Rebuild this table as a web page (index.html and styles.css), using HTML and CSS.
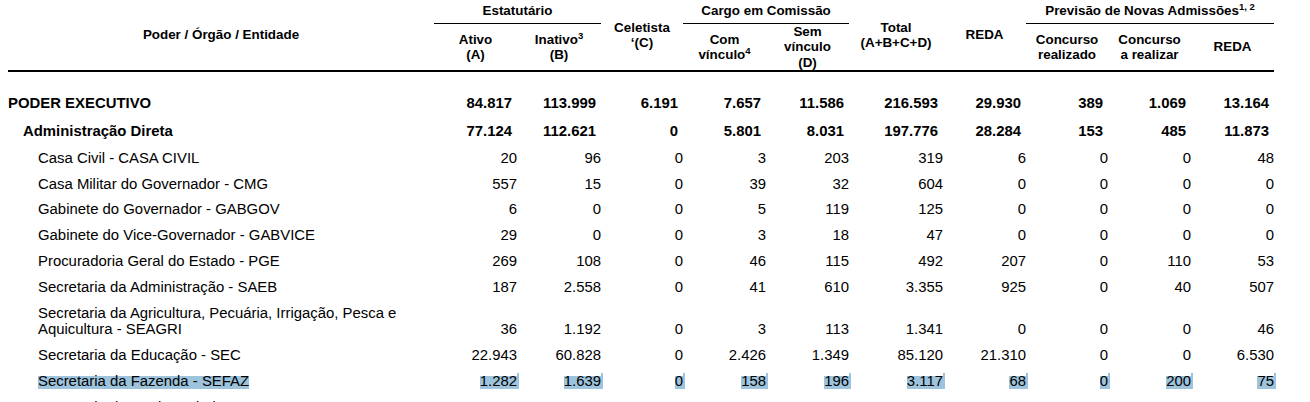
FILE: index.html
```html
<!DOCTYPE html>
<html lang="pt-BR">
<head>
<meta charset="utf-8">
<title>Quadro de Pessoal</title>
<link rel="stylesheet" href="styles.css">
</head>
<body>
<table class="grid">
  <colgroup>
    <col class="c-name">
    <col class="c-83"><col class="c-84"><col class="c-82"><col class="c-83"><col class="c-83">
    <col class="c-94"><col class="c-83"><col class="c-82"><col class="c-83"><col class="c-83">
  </colgroup>
  <thead>
    <tr class="h1">
      <th rowspan="2" class="span">Poder / Órgão / Entidade</th>
      <th colspan="2" class="group">Estatutário</th>
      <th rowspan="2" class="span">Celetista<br>‘(C)</th>
      <th colspan="2" class="group">Cargo em Comissão</th>
      <th rowspan="2" class="span">Total<br>(A+B+C+D)</th>
      <th rowspan="2" class="span">REDA</th>
      <th colspan="3" class="group">Previsão de Novas Admissões<sup>1, 2</sup></th>
    </tr>
    <tr class="h2">
      <th class="sub">Ativo<br>(A)</th>
      <th class="sub">Inativo<sup>3</sup><br>(B)</th>
      <th class="sub">Com<br>vínculo<sup>4</sup></th>
      <th class="sub">Sem<br>vínculo<br>(D)</th>
      <th class="sub">Concurso<br>realizado</th>
      <th class="sub">Concurso<br>a realizar</th>
      <th class="sub">REDA</th>
    </tr>
  </thead>
  <tbody>
    <tr class="lvl0">
      <td class="name">PODER EXECUTIVO</td>
      <td>84.817</td><td>113.999</td><td>6.191</td><td>7.657</td><td>11.586</td><td>216.593</td><td>29.930</td><td>389</td><td>1.069</td><td>13.164</td>
    </tr>
    <tr class="lvl1">
      <td class="name">Administração Direta</td>
      <td>77.124</td><td>112.621</td><td>0</td><td>5.801</td><td>8.031</td><td>197.776</td><td>28.284</td><td>153</td><td>485</td><td>11.873</td>
    </tr>
    <tr class="lvl2">
      <td class="name">Casa Civil - CASA CIVIL</td>
      <td>20</td><td>96</td><td>0</td><td>3</td><td>203</td><td>319</td><td>6</td><td>0</td><td>0</td><td>48</td>
    </tr>
    <tr class="lvl2">
      <td class="name">Casa Militar do Governador - CMG</td>
      <td>557</td><td>15</td><td>0</td><td>39</td><td>32</td><td>604</td><td>0</td><td>0</td><td>0</td><td>0</td>
    </tr>
    <tr class="lvl2">
      <td class="name">Gabinete do Governador - GABGOV</td>
      <td>6</td><td>0</td><td>0</td><td>5</td><td>119</td><td>125</td><td>0</td><td>0</td><td>0</td><td>0</td>
    </tr>
    <tr class="lvl2">
      <td class="name">Gabinete do Vice-Governador - GABVICE</td>
      <td>29</td><td>0</td><td>0</td><td>3</td><td>18</td><td>47</td><td>0</td><td>0</td><td>0</td><td>0</td>
    </tr>
    <tr class="lvl2">
      <td class="name">Procuradoria Geral do Estado - PGE</td>
      <td>269</td><td>108</td><td>0</td><td>46</td><td>115</td><td>492</td><td>207</td><td>0</td><td>110</td><td>53</td>
    </tr>
    <tr class="lvl2">
      <td class="name">Secretaria da Administração - SAEB</td>
      <td>187</td><td>2.558</td><td>0</td><td>41</td><td>610</td><td>3.355</td><td>925</td><td>0</td><td>40</td><td>507</td>
    </tr>
    <tr class="lvl2">
      <td class="name">Secretaria da Agricultura, Pecuária, Irrigação, Pesca e Aquicultura - SEAGRI</td>
      <td>36</td><td>1.192</td><td>0</td><td>3</td><td>113</td><td>1.341</td><td>0</td><td>0</td><td>0</td><td>46</td>
    </tr>
    <tr class="lvl2">
      <td class="name">Secretaria da Educação - SEC</td>
      <td>22.943</td><td>60.828</td><td>0</td><td>2.426</td><td>1.349</td><td>85.120</td><td>21.310</td><td>0</td><td>0</td><td>6.530</td>
    </tr>
    <tr class="lvl2 selected">
      <td class="name"><span class="sel">Secretaria da Fazenda - SEFAZ</span></td>
      <td><span class="sel">1.282</span></td><td><span class="sel">1.639</span></td><td><span class="sel">0</span></td><td><span class="sel">158</span></td><td><span class="sel">196</span></td><td><span class="sel">3.117</span></td><td><span class="sel">68</span></td><td><span class="sel">0</span></td><td><span class="sel">200</span></td><td><span class="sel">75</span></td>
    </tr>
    <tr class="lvl2">
      <td class="name">Secretaria da Justiça, Direitos Humanos - SJDH</td>
      <td>84</td><td>1.101</td><td>0</td><td>1</td><td>174</td><td>1.360</td><td>30</td><td>0</td><td>0</td><td>30</td>
    </tr>
  </tbody>
</table>
</body>
</html>
```

FILE: styles.css
```css
html {
  overflow: hidden;
}

body {
  margin: 0;
  padding: 0 8px;
  background: #ffffff;
  color: #000000;
  font-family: "Liberation Sans", Arial, sans-serif;
}

.grid {
  border-collapse: separate;
  border-spacing: 0;
  table-layout: fixed;
  width: 1266px;
}

.c-name { width: 426px; }
.c-82 { width: 82px; }
.c-83 { width: 83px; }
.c-84 { width: 84px; }
.c-94 { width: 94px; }

.grid th {
  box-sizing: border-box;
  padding: 0;
  font-size: 13.4px;
  line-height: 15.3px;
  font-weight: bold;
  text-align: center;
  white-space: nowrap;
}

.grid sup {
  font-size: 9.5px;
  line-height: 0;
  vertical-align: 5px;
}

.h1 { height: 24px; }
.h2 { height: 48px; }

.grid th.span {
  vertical-align: middle;
  border-bottom: 2px solid #000;
}

.grid th.group {
  vertical-align: bottom;
  padding-bottom: 5px;
  border-bottom: 1px solid #000;
}

.grid th.sub {
  vertical-align: middle;
  border-bottom: 2px solid #000;
}

.grid td {
  padding: 4.5px 0;
  font-size: 14.9px;
  line-height: 16.8px;
  text-align: right;
  vertical-align: bottom;
  white-space: nowrap;
}

.grid td.name {
  text-align: left;
  white-space: normal;
}

.lvl0 td {
  font-weight: bold;
  padding-top: 22.5px;
  padding-bottom: 7.7px;
  padding-right: 5px;
}

.lvl1 td {
  font-weight: bold;
  padding-bottom: 5px;
  padding-right: 5px;
}

.lvl0 td.name { padding-left: 0; padding-right: 0; }
.lvl1 td.name { padding-left: 15px; padding-right: 0; }
.lvl2 td.name { padding-left: 30px; padding-right: 20px; }

.sel {
  background: linear-gradient(to bottom, transparent 3px, #9ec4dd 3px);
  box-shadow: 2px 0 0 #9ec4dd;
}

.name .sel {
  box-shadow: none;
}
```
